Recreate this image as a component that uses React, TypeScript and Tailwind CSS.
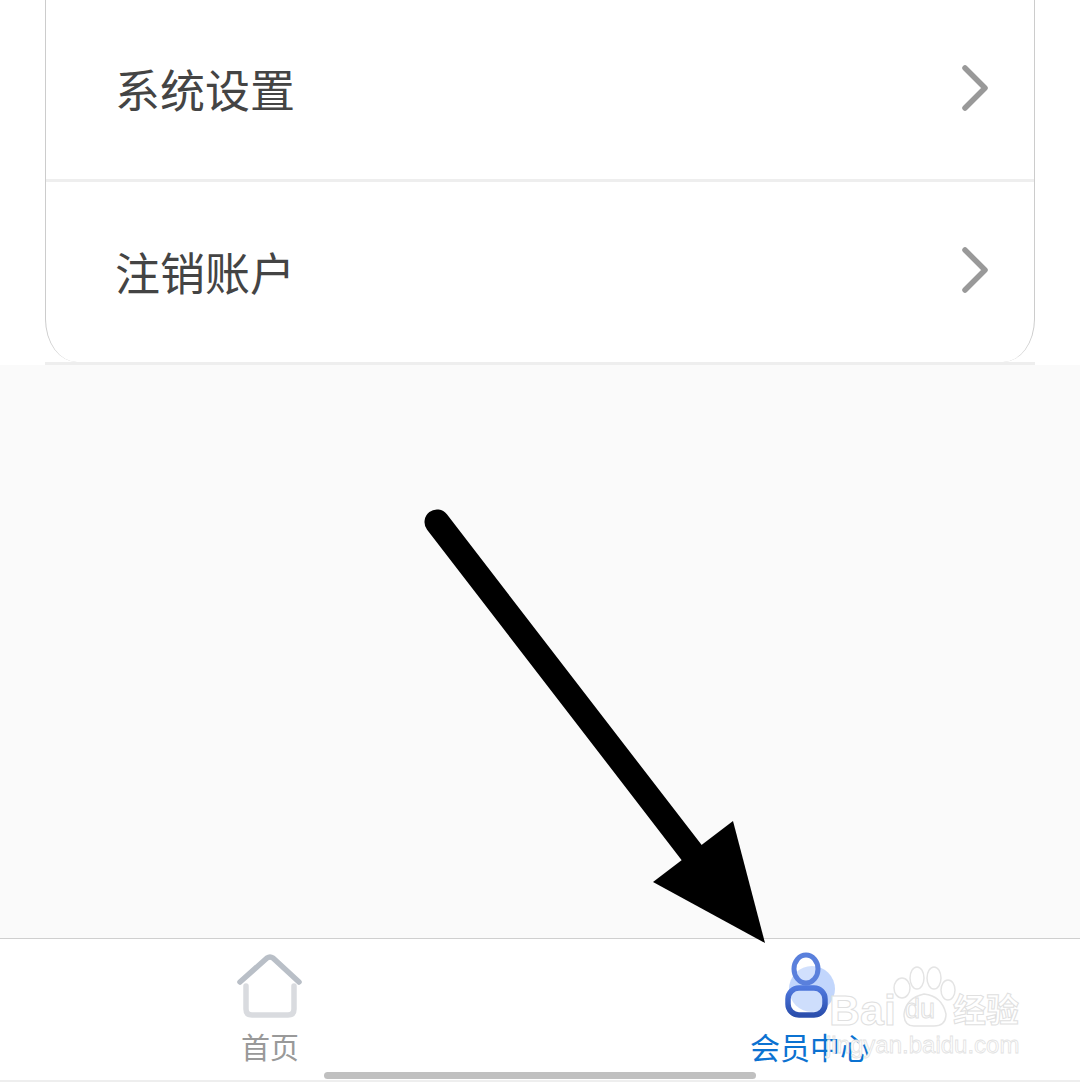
import React from "react";

function Chevron() {
  return (
    <svg width="30" height="46" viewBox="0 0 30 46" fill="none">
      <path d="M5 3 L25 23 L5 43" stroke="#999999" strokeWidth="5.5" strokeLinecap="round" strokeLinejoin="round" />
    </svg>
  );
}

function MenuRow({ label, height }: { label: string; height: string }) {
  return (
    <div className={`flex items-center justify-between pl-[69px] pr-[44px] pb-[4px] ${height}`}>
      <span className="text-[45px] leading-none text-[#444444] mt-[2px]">{label}</span>
      <Chevron />
    </div>
  );
}

function HomeIcon() {
  return (
    <svg width="70" height="68" viewBox="0 0 70 68" fill="none">
      <path d="M11 33 V56 Q11 62 17 62 H53 Q59 62 59 56 V33" stroke="#d9dbdf" strokeWidth="5.5" strokeLinecap="round" />
      <path d="M5 29 L32 5 Q35 3 38 5 L64 29" stroke="#b9bfc7" strokeWidth="5.5" strokeLinecap="round" strokeLinejoin="round" />
    </svg>
  );
}

function MemberIcon() {
  return (
    <svg width="54" height="68" viewBox="0 0 54 68" fill="none">
      <defs>
        <linearGradient id="memberBody" x1="0" y1="0" x2="0" y2="1">
          <stop offset="0" stopColor="#5079de" />
          <stop offset="1" stopColor="#2a4ead" />
        </linearGradient>
      </defs>
      <circle cx="29" cy="37" r="23" fill="#c2d6fc" />
      <ellipse cx="23" cy="17" rx="12" ry="14" fill="#ffffff" fillOpacity="0.25" stroke="#5a80dc" strokeWidth="5" />
      <rect x="5" y="36" width="37" height="27" rx="11" fill="#ffffff" fillOpacity="0.2" stroke="url(#memberBody)" strokeWidth="5.5" />
    </svg>
  );
}

export default function App() {
  return (
    <div className="relative flex flex-col w-[1080px] h-[1082px] overflow-hidden bg-[#fafafa] font-['Noto_Sans_CJK_SC',sans-serif]">
      {/* Menu card */}
      <div className="bg-white px-[45px] h-[365px]">
        <div className="border-x border-[#cccccc] rounded-bl-[32px_43px] rounded-br-[32px_43px] h-[362px]">
          <MenuRow label="系统设置" height="h-[179px]" />
          <div className="h-[3px] bg-[#eeeeee]" />
          <MenuRow label="注销账户" height="h-[180px]" />
        </div>
        <div className="h-[3px] bg-[#eeeeee]" />
      </div>

      <div className="flex-1" />

      {/* Tab bar */}
      <div className="relative flex h-[144px] bg-white border-t border-[#cfcfcf] border-b-2 border-b-[#eeeeee]">
        <div className="flex flex-col items-center w-[540px] pt-[14px]">
          <HomeIcon />
          <span className="text-[29px] leading-none mt-[11px] text-[#999999]">首页</span>
        </div>
        <div className="flex flex-col items-center w-[540px] pt-[13px]">
          <div className="h-[69px]">
            <MemberIcon />
          </div>
          <span className="text-[30px] leading-none mt-[10px] text-[#0b72d1]">会员中心</span>
        </div>
        <div className="absolute left-[324px] bottom-[1px] w-[432px] h-[7px] rounded-full bg-[#c0c0c0]" />
      </div>

      {/* Annotation arrow */}
      <svg className="absolute left-0 top-0" width="1080" height="1082" viewBox="0 0 1080 1082">
        <path d="M437 522 L692 853" stroke="#000000" strokeWidth="25" strokeLinecap="round" />
        <polygon points="733,821 765,943 653,882" fill="#000000" />
      </svg>

      {/* Baidu watermark */}
      <svg className="absolute left-[890px] top-[964px]" width="70" height="66" viewBox="0 0 70 66" fill="none" stroke="#e4e4e4" strokeWidth="1.5">
        <ellipse cx="12" cy="24" rx="8" ry="10" fill="#ffffff" />
        <ellipse cx="27" cy="14" rx="7" ry="11" fill="#ffffff" />
        <ellipse cx="44" cy="14" rx="7" ry="11" fill="#ffffff" />
        <ellipse cx="58" cy="26" rx="7" ry="10" fill="#ffffff" />
        <path d="M14 50 Q16 34 34 30 Q52 32 56 50 Q56 62 44 62 H24 Q14 62 14 50 Z" fill="#ffffff" />
      </svg>
      <span className="absolute left-[829px] top-[989px] text-[43px] leading-none font-bold font-['Liberation_Sans',sans-serif] text-white [-webkit-text-stroke:1px_#e0e0e0]">Bai</span>
      <span className="absolute left-[905px] top-[996px] text-[27px] leading-none font-['Liberation_Sans',sans-serif] text-white [-webkit-text-stroke:1px_#e0e0e0]">du</span>
      <span className="absolute left-[953px] top-[992px] text-[33px] leading-none font-bold text-white [-webkit-text-stroke:1px_#e0e0e0]">经验</span>
      <span className="absolute left-[826px] top-[1033px] text-[24px] leading-none font-['Liberation_Sans',sans-serif] text-white [-webkit-text-stroke:0.8px_#e2e2e2]">jingyan.baidu.com</span>
    </div>
  );
}
